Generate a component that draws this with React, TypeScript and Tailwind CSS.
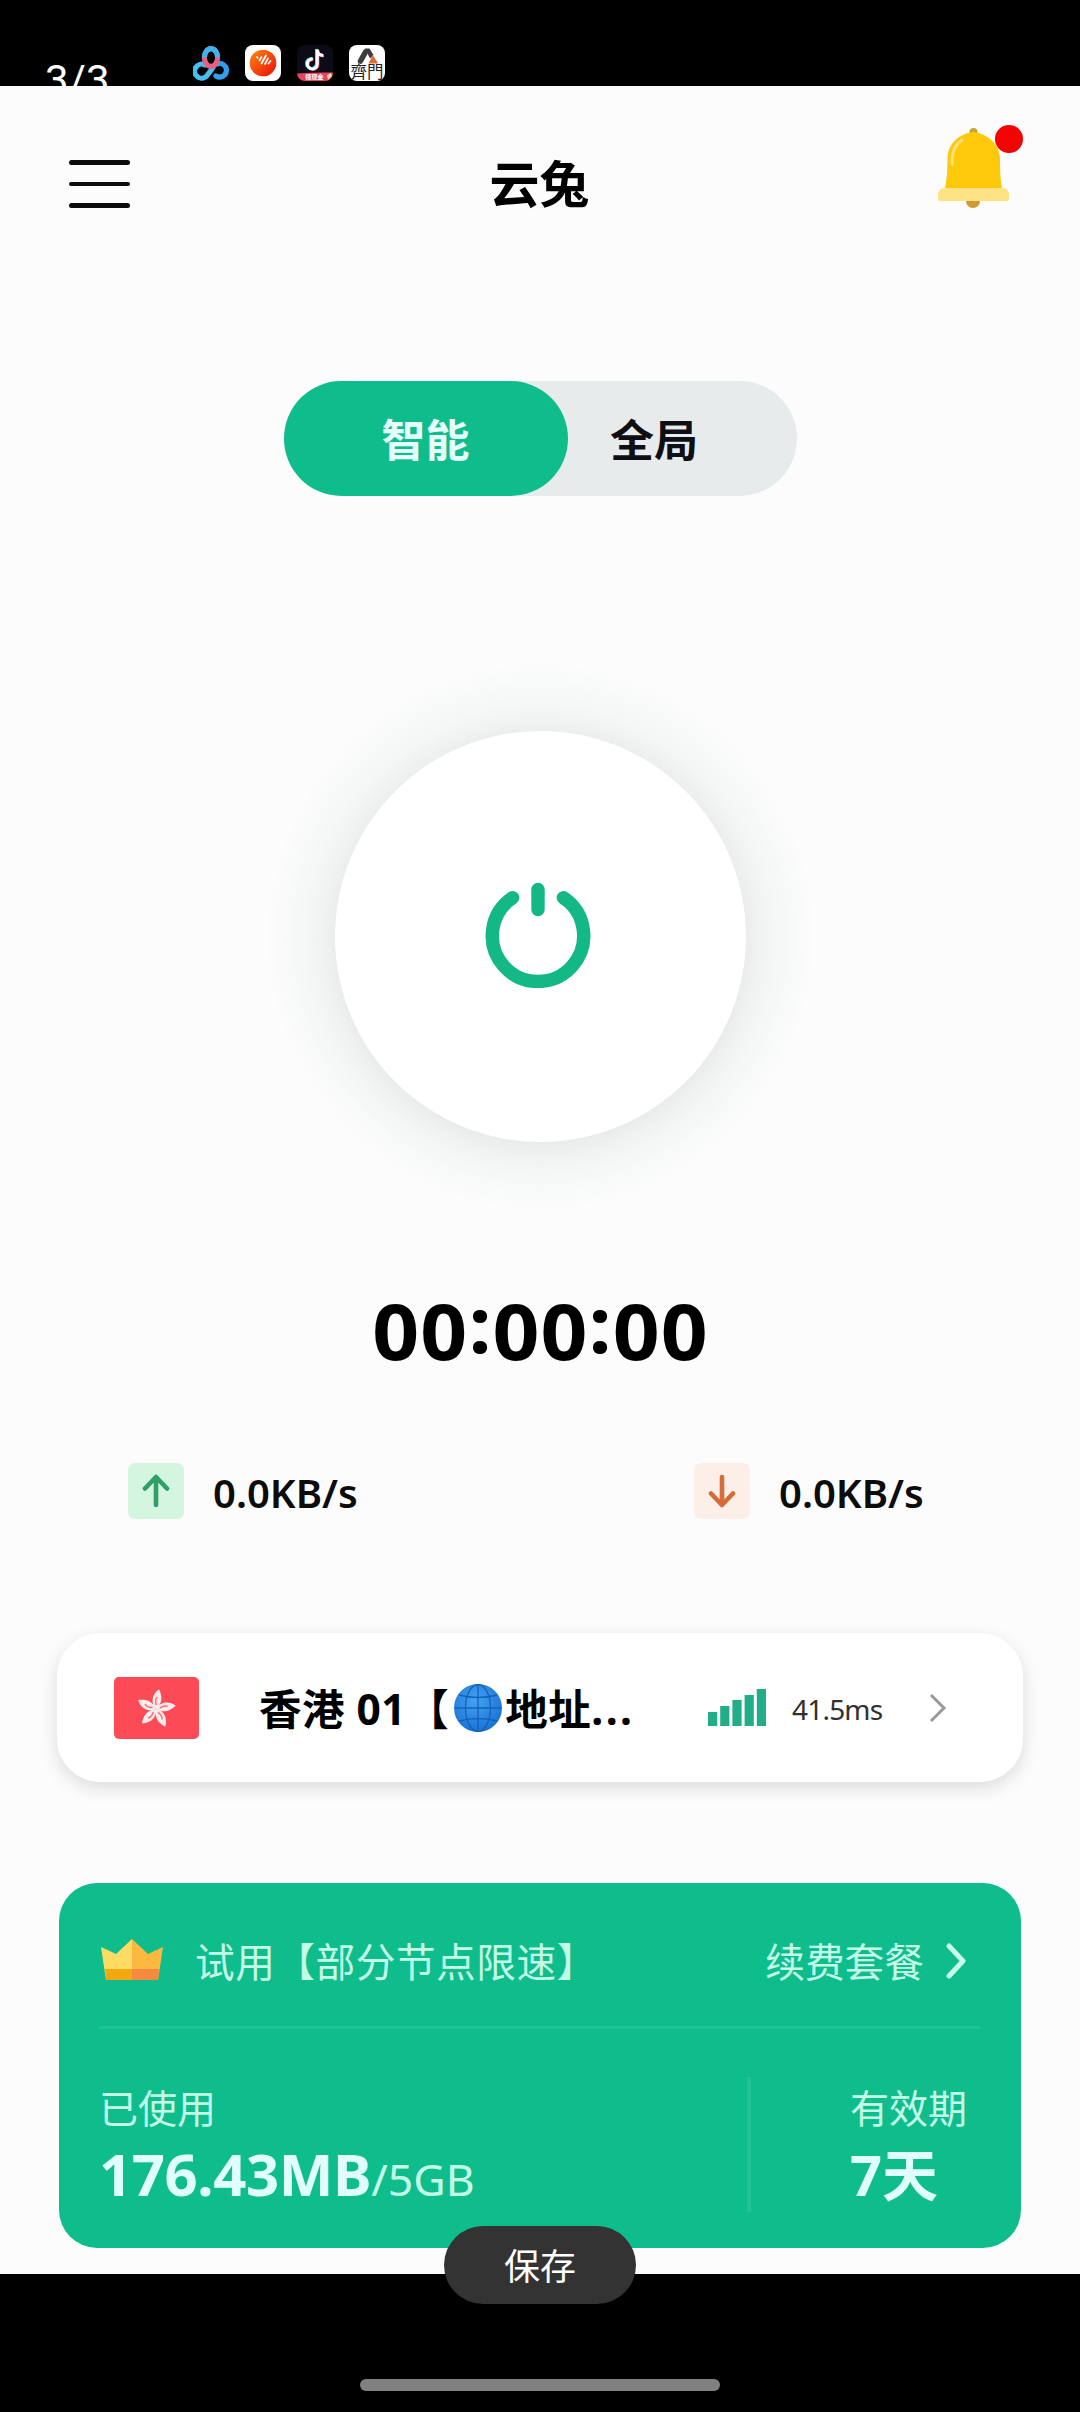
import type { ReactNode } from 'react';

const SIGNAL = [
  { x: 0, h: 14 },
  { x: 12.2, h: 20 },
  { x: 24.4, h: 26 },
  { x: 36.6, h: 31 },
  { x: 48.8, h: 37 },
];

const PETALS = [0, 72, 144, 216, 288];

const NetdiskIcon = () => (
  <svg width="36" height="37" viewBox="0 0 36 37" fill="none" strokeWidth="5.200">
    <path d="M20 22.500l-5.500 7.500a7 7 0 1 1-2.500-10" stroke="#46bff0" strokeLinecap="round" />
    <path d="M23 31a6.800 6.800 0 1 0 1-12" stroke="#2f9fee" strokeLinecap="round" />
    <ellipse cx="18" cy="12.500" rx="6.600" ry="8.800" stroke="#e8607f" />
    <path d="M11.400 12.500a6.600 8.800 0 0 1 13.200 0" stroke="#3cb5ef" />
  </svg>
);

const MusicIcon = () => (
  <svg width="36" height="36" viewBox="0 0 36 36">
    <defs>
      <linearGradient id="music" x1="0" y1="0" x2="1" y2="1">
        <stop offset="0" stopColor="#f98a13" />
        <stop offset="1" stopColor="#ee0a05" />
      </linearGradient>
    </defs>
    <rect width="36" height="36" rx="8" fill="#fff" />
    <circle cx="18" cy="18" r="13.300" fill="url(#music)" />
    <path
      d="M12 12l.7 1M14.500 15.500l2-3.500M16.500 18.500l4.500-8M20 19l3-5.500M23.500 18.500l2-2.500"
      stroke="#fff"
      strokeWidth="1.700"
      strokeLinecap="round"
    />
  </svg>
);

const NoteIcon = () => (
  <svg width="36" height="36" viewBox="0 0 36 36">
    <defs>
      <clipPath id="note">
        <rect width="36" height="36" rx="8" />
      </clipPath>
    </defs>
    <g clipPath="url(#note)">
      <rect width="36" height="36" fill="#0c0b16" />
      <g fill="none" strokeWidth="3">
        <path d="M19.500 4v14.500a5 5 0 1 1-4.500-5M19.500 5c.5 3 3 5 6 5" stroke="#25e6e6" />
        <path d="M21 5v14.500a5 5 0 1 1-4.500-5M21 6c.5 3 3 5 6 5" stroke="#f4305b" />
        <path d="M20.300 4.500V19a5 5 0 1 1-4.500-5M20.300 5.500c.5 3 3 5 6 5" stroke="#fff" />
      </g>
      <path d="M0 28.500q18-1.500 36-1V36H0z" fill="#e5455f" />
      <path d="M30 30l4-2 1 3-4 4z" fill="#f7d9a8" />
      <text x="8" y="34" fontSize="6.200" fontWeight="700" fill="#fff" fontFamily="Noto Sans CJK SC">
        领现金
      </text>
    </g>
  </svg>
);

const GateIcon = () => (
  <svg width="36" height="36" viewBox="0 0 36 36">
    <rect width="36" height="36" rx="8" fill="#fff" />
    <path d="M11.500 16L16.500 7" stroke="#3c3c3c" strokeWidth="5.500" strokeLinecap="round" />
    <path d="M16 3.500h4.500L24.500 10l-3.500 3.500z" fill="#3c3c3c" />
    <path d="M23.800 10l5.400 8.500h-9.700z" fill="#df6d33" />
    <text x="1.500" y="33" fontSize="16.500" fill="#222" fontFamily="Noto Sans CJK TC">
      齊門
    </text>
  </svg>
);

const Bell = () => (
  <svg width="71" height="83" viewBox="0 0 71 83">
    <circle cx="35" cy="74" r="7" fill="#cf9a35" />
    <circle cx="35.500" cy="5" r="4" fill="#c9a32c" />
    <path
      d="M35.500 5C21 7 9.500 16 9.500 33C9.500 48 8 56 6.500 64h58c-1.500-8-2.500-16-2.500-31C62 16 49 7 35.500 5z"
      fill="#fdc90a"
    />
    <path d="M14 37c0-13 3-19 10-24" stroke="#fde27a" strokeWidth="3" fill="none" strokeLinecap="round" />
    <path d="M6 61h59q5 0 6 6v5q0 2-2 2H2q-2 0-2-2v-5q1-6 6-6z" fill="#fde383" />
  </svg>
);

const Power = () => (
  <svg
    className="mb-[6px] mr-[4px]"
    width="106"
    height="108"
    viewBox="0 0 106 108"
    fill="none"
    stroke="#14b887"
    strokeWidth="13.400"
    strokeLinecap="round"
  >
    <path d="M27.700 17.700a45.700 45.700 0 1 0 50.600 0" />
    <path d="M53 9.500v20" />
  </svg>
);

const Flag = () => (
  <svg width="85" height="62" viewBox="0 0 85 62">
    <rect width="85" height="62" rx="5" fill="#fc4a57" />
    {PETALS.map((deg) => (
      <g key={deg} transform={`rotate(${deg + 6} 42 32)`}>
        <path d="M42 32c-6-5-6-14 1-20c4 7 5 13-1 20z" fill="#fdeceb" />
        <path d="M42 28c-1.500-3-1.500-6 0-8" stroke="#fc7079" strokeWidth="1.500" fill="none" />
      </g>
    ))}
  </svg>
);

const Globe = () => (
  <svg className="ml-[5px] mr-[3px] shrink-0" width="48" height="48" viewBox="0 0 48 48">
    <defs>
      <radialGradient id="globe" cx=".45" cy=".35" r=".65">
        <stop offset="0" stopColor="#45a3f3" />
        <stop offset="1" stopColor="#1a72d3" />
      </radialGradient>
    </defs>
    <circle cx="24" cy="24" r="24" fill="url(#globe)" />
    <g fill="none" stroke="#1462b8" strokeWidth="1.300">
      <path d="M24 0v48M1 24h46M5 11q19 5 38 0M5 37q19-5 38 0" />
      <ellipse cx="24" cy="24" rx="12.500" ry="23.500" />
    </g>
  </svg>
);

const Crown = () => (
  <svg className="-mt-[2px]" width="62" height="41" viewBox="0 0 62 41">
    <path d="M0 8l15 7L31 0v41H5z" fill="#fedb62" />
    <path d="M62 8l-15 7L31 0v41h26z" fill="#fdb93f" />
    <path d="M4 30h27v11H5z" fill="#f3a813" />
    <path d="M31 30h27l-1 11H31z" fill="#f5893f" />
  </svg>
);

const Speed = ({ children, className }: { children: ReactNode; className: string }) => (
  <div className="flex items-center">
    <div className={`flex h-[56px] w-[56px] items-center justify-center rounded-[7px] ${className}`}>
      <svg
        width="30"
        height="34"
        viewBox="0 0 30 34"
        fill="none"
        stroke="currentColor"
        strokeWidth="4.600"
        strokeLinecap="round"
        strokeLinejoin="round"
      >
        {children}
      </svg>
    </div>
    <p className="ml-[29px] pt-[3px] text-[40px] font-semibold leading-none text-[#0c0c0c]">0.0KB/s</p>
  </div>
);

const StatusBar = () => (
  <div className="flex h-[86px] overflow-hidden bg-black">
    <p className="ml-[45px] mt-[56px] w-[148px] font-[Roboto] text-[42px] leading-[50px] text-white">3/3</p>
    <div className="mt-[45px] flex gap-[16px]">
      <NetdiskIcon />
      <MusicIcon />
      <NoteIcon />
      <GateIcon />
    </div>
  </div>
);

const Header = () => (
  <header className="flex h-[198px] items-start justify-between pl-[69px] pr-[71px]">
    <div className="mt-[74px] flex w-[72px] flex-col gap-[17px]">
      <span className="h-[4.500px] w-[61px] rounded-full bg-[#0c0c0c]" />
      <span className="h-[4.500px] w-[61px] rounded-full bg-[#0c0c0c]" />
      <span className="h-[4.500px] w-[61px] rounded-full bg-[#0c0c0c]" />
    </div>
    <h1 className="mt-[70px] text-[50px] font-bold leading-[56px] text-black">云兔</h1>
    <div className="relative mt-[41px]">
      <Bell />
      <span className="absolute -right-[14px] -top-[2px] h-[28px] w-[28px] rounded-full bg-[#f40303]" />
    </div>
  </header>
);

const ModeSwitch = () => (
  <div className="mx-auto mt-[97px] flex h-[115px] w-[513px] rounded-full bg-[#e8ebec] text-[44px] font-bold">
    <div className="flex w-[284px] items-center justify-center rounded-full bg-[#0fbd8c] pt-[3px] text-[#e6fffa]">智能</div>
    <div className="flex w-[173px] items-center justify-center pt-[3px] text-[#0d0f14]">全局</div>
  </div>
);

const ServerCard = () => (
  <div className="mx-[57px] mt-[113px] flex h-[149px] items-center rounded-[43px] bg-white pl-[57px] shadow-[0_6px_18px_rgba(0,0,0,0.13)]">
    <Flag />
    <div className="ml-[60px] flex w-[430px] items-center whitespace-pre text-[42.500px] font-bold leading-none tracking-[0.5px] text-black">
      <span className="pt-[4px]">香港 01【</span>
      <Globe />
      <span className="pt-[4px]">地址</span>
      <span className="pt-[4px] tracking-[2.500px]">...</span>
    </div>
    <svg className="ml-[19px]" width="58" height="37" viewBox="0 0 58 37" fill="#20ad87">
      {SIGNAL.map(({ x, h }) => (
        <rect key={x} x={x} y={37 - h} width="9.200" height={h} />
      ))}
    </svg>
    <p className="ml-[26px] w-[92px] pt-[3px] text-[28px] leading-none tracking-[-0.8px] text-[#303030]">41.5ms</p>
    <svg className="ml-[45px]" width="18" height="30" viewBox="0 0 18 30" fill="none" stroke="#9a9a9a" strokeWidth="3">
      <path d="M2 2l13 13L2 28" />
    </svg>
  </div>
);

const PlanCard = () => (
  <div className="mx-[59px] mt-[101px] h-[365px] rounded-[38px] bg-[#0fbd8c] pl-[40px] text-[#c4fbe6]">
    <div className="flex h-[143px] items-center pt-[12px]">
      <div className="flex h-[41px] w-[883px] items-center pl-[2px] text-[39.700px] leading-none">
        <Crown />
        <p className="ml-[32px] flex-1 pt-[4px] tracking-[0.500px]">试用【部分节点限速】</p>
        <p className="pt-[4px]">续费套餐</p>
        <svg
          className="ml-[22px] mr-[14px]"
          width="22"
          height="36"
          viewBox="0 0 22 36"
          fill="none"
          stroke="#c9fdec"
          strokeWidth="5"
          strokeLinecap="round"
          strokeLinejoin="round"
        >
          <path d="M3 3l14 15L3 33" />
        </svg>
      </div>
    </div>
    <div className="h-[3px] w-[881px] bg-[#21c296]" />
    <div className="flex">
      <div className="w-[648px] pt-[57px]">
        <p className="text-[39px] leading-[44px]">已使用</p>
        <p className="mt-[15px] flex items-baseline leading-[58px]">
          <span className="text-[58px] font-bold tracking-[-0.400px] text-[#e0fffb]">176.43MB</span>
          <span className="text-[44.500px]">/5GB</span>
        </p>
      </div>
      <div className="mt-[48px] h-[135px] w-[4px] bg-[#21c296]" />
      <div className="pl-[99px] pt-[57px]">
        <p className="text-[39px] leading-[44px]">有效期</p>
        <p className="mt-[15px] text-[56px] font-bold leading-[58px] text-[#e0fffb]">7天</p>
      </div>
    </div>
  </div>
);

const App = () => {
  return (
    <div className="relative flex h-[2412px] w-[1080px] flex-col overflow-hidden bg-black font-['Noto_Sans','Noto_Sans_CJK_SC',sans-serif]">
      <StatusBar />
      <main className="h-[2188px] bg-[#fcfcfc]">
        <Header />
        <ModeSwitch />
        <div className="mx-auto mt-[235px] flex h-[411px] w-[411px] items-center justify-center rounded-full bg-white shadow-[0_3px_45px_rgba(30,50,45,0.11),0_0_24px_55px_rgba(40,80,65,0.025)]">
          <Power />
        </div>
        <div className="mt-[139px] flex h-[100px] scale-x-[1.066] items-center justify-center pl-[1px] text-[77px] font-bold tracking-[1px] text-black">
          <span>00</span>
          <span className="-mt-[14px]">:</span>
          <span>00</span>
          <span className="-mt-[14px]">:</span>
          <span>00</span>
        </div>
        <div className="mt-[82px] flex">
          <div className="w-[566px] pl-[128px]">
            <Speed className="bg-[#d4f6e0] text-[#2f9f65]">
              <path d="M15 31V3M4 14.500L15 3l11 11.500" />
            </Speed>
          </div>
          <div className="pl-[128px]">
            <Speed className="bg-[#fcefe8] text-[#d66c3a]">
              <path d="M15 3v28M4 19.500L15 31l11-11.500" />
            </Speed>
          </div>
        </div>
        <div className="pt-px">
          <ServerCard />
        </div>
        <PlanCard />
      </main>
      <div className="absolute left-[444px] top-[2226px] flex h-[78px] w-[192px] items-center justify-center rounded-full bg-[#333333] pt-[3px] text-[36px] text-white">
        保存
      </div>
      <div className="mx-auto mt-[105px] h-[12px] w-[360px] rounded-full bg-[#808080]" />
    </div>
  );
};

export default App;
